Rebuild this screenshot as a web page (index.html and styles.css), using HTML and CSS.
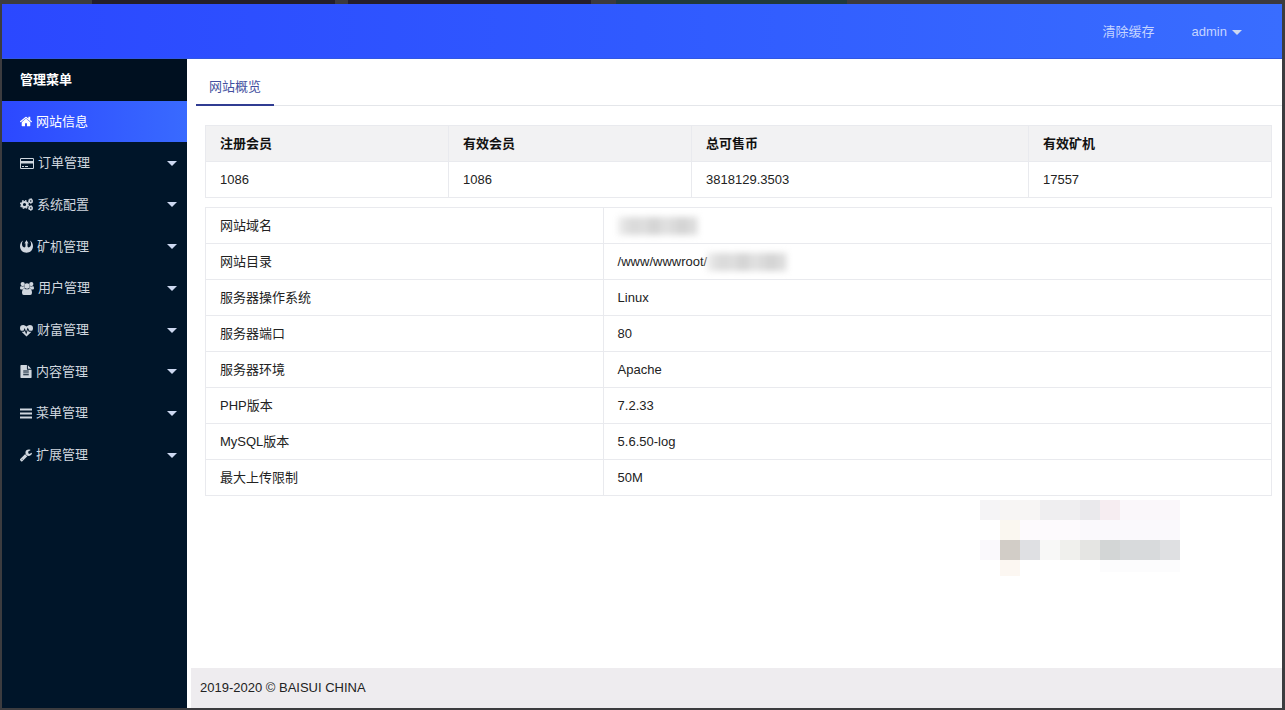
FILE: index.html
```html
<!DOCTYPE html>
<html lang="zh-CN">
<head>
    <meta charset="UTF-8">
    <meta name="viewport" content="width=device-width, initial-scale=1.0">
    <title>网站概览</title>
    <link rel="stylesheet" href="styles.css">
</head>
<body>
    <div class="top-strip"></div>
    <header class="header">
        <a href="#">清除缓存</a>
        <a href="#" class="user">admin <span class="caret"></span></a>
    </header>

    <div class="wrapper">
        <nav class="sidebar">
            <div class="menu">
                <div class="menu-title">管理菜单</div>
                <a href="#" class="menu-item active">
                    <svg class="icon" viewBox="89 200 1614 1400"><path d="M1472 992v480q0 26-19 45t-45 19h-384v-384h-256v384h-384q-26 0-45-19t-19-45v-480q0-1 .5-3t.5-3l575-474 575 474q1 2 1 6zm223-69l-62 74q-8 9-21 11h-3q-13 0-21-7l-692-577-692 577q-12 8-24 7-13-2-21-11l-62-74q-8-10-7-23.5t11-21.5l719-599q32-26 76-26t76 26l244 204v-195q0-14 9-23t23-9h192q14 0 23 9t9 23v408l219 182q10 8 11 21.5t-7 23.5z"/></svg>
                    <span>网站信息</span>
                </a>
                <a href="#" class="menu-item">
                    <svg class="icon wide" viewBox="0 0 14 12"><path fill-rule="evenodd" d="M1.200 .5h11.600q1.200 0 1.200 1.200v8.600q0 1.200-1.200 1.200H1.200Q0 11.500 0 10.300V1.700Q0 .5 1.200 .5zM1 1.500v2h12v-2zM1 6v4.500h12V6zM2 8.500h2v1H2zM5 8.500h3v1H5z"/></svg>
                    <span>订单管理</span><i class="caret"></i>
                </a>
                <a href="#" class="menu-item">
                    <svg class="icon mid" viewBox="0 0 13 13"><g fill="none" stroke="currentColor"><circle cx="4.500" cy="6.500" r="2.600" stroke-width="2"/><circle cx="4.500" cy="6.500" r="3.900" stroke-width="1.300" stroke-dasharray="1.700 1.360"/><circle cx="10.700" cy="3" r="1.500" stroke-width="1.400"/><circle cx="10.700" cy="3" r="2.300" stroke-dasharray="1.400 1"/><circle cx="10.700" cy="10" r="1.500" stroke-width="1.400"/><circle cx="10.700" cy="10" r="2.300" stroke-dasharray="1.400 1"/></g></svg>
                    <span>系统配置</span><i class="caret"></i>
                </a>
                <a href="#" class="menu-item">
                    <svg class="icon mid" viewBox="0 0 13 13"><path d="M3.200 .6C1.200 1.700 0 3.900 0 6.300 0 10 2.900 12.800 6.500 12.800S13 10 13 6.300C13 3.900 11.800 1.700 9.800 .6c1 1.400 1.400 2.700 1.200 4C10.800 6.300 10 7.400 8.800 7.400 8 7.400 7.500 6.800 7.500 6V3.200l1 .3L6.500 0 4.500 3.500l1-.3V6c0 .8-.5 1.400-1.300 1.400C3 7.400 2.200 6.300 2 4.600 1.800 3.300 2.200 2 3.200 .6z"/></svg>
                    <span>矿机管理</span><i class="caret"></i>
                </a>
                <a href="#" class="menu-item">
                    <svg class="icon wide" viewBox="0 0 14 13"><circle cx="2.700" cy="2.100" r="2.100"/><circle cx="11.300" cy="2.100" r="2.100"/><circle cx="7" cy="4" r="2.700"/><path d="M1 4q1.700 1 3 0 .2 1.600 1 2.300Q3.400 6.300 2.700 7.500H1.300Q0 7.500 0 6.200 0 4.500 1 4zM13 4q-1.700 1-3 0-.2 1.600-1 2.300 1.600 0 2.300 1.200h1.400Q14 7.500 14 6.200 14 4.500 13 4zM4.300 6.500q2.700 1.700 5.400 0Q12 7.200 12 10.800q0 2.200-1.800 2.200H3.800Q2 13 2 10.800q0-3.600 2.300-4.300z"/></svg>
                    <span>用户管理</span><i class="caret"></i>
                </a>
                <a href="#" class="menu-item">
                    <svg class="icon mid" viewBox="0 0 13 12"><path d="M6.500 12 1.600 7.200h2.500l.6-1.300 1.500 4 1.600-4.700 1 2h2.700zM.8 6.200Q0 5 0 3.700 0 .5 3.300 .5q1.700 0 3.200 1.600Q8 .5 9.700 .5 13 .5 13 3.700q0 1.300-.8 2.500H9.400L7.700 2.900 6.100 7.300 4.700 3.500 3.500 6.200z"/></svg>
                    <span>财富管理</span><i class="caret"></i>
                </a>
                <a href="#" class="menu-item">
                    <svg class="icon" viewBox="128 0 1536 1792"><path d="M1596 476q14 14 28 36h-472v-472q22 14 36 28zm-476 164h544v1056q0 40-28 68t-68 28h-1344q-40 0-68-28t-28-68v-1600q0-40 28-68t68-28h800v544q0 40 28 68t68 28zm160 736v-64q0-14-9-23t-23-9h-704q-14 0-23 9t-9 23v64q0 14 9 23t23 9h704q14 0 23-9t9-23zm0-256v-64q0-14-9-23t-23-9h-704q-14 0-23 9t-9 23v64q0 14 9 23t23 9h704q14 0 23-9t9-23zm0-256v-64q0-14-9-23t-23-9h-704q-14 0-23 9t-9 23v64q0 14 9 23t23 9h704q14 0 23-9t9-23z"/></svg>
                    <span>内容管理</span><i class="caret"></i>
                </a>
                <a href="#" class="menu-item">
                    <svg class="icon" viewBox="0 0 12 12"><path d="M0 1h12v2H0zM0 5h12v2H0zM0 9h12v2H0z"/></svg>
                    <span>菜单管理</span><i class="caret"></i>
                </a>
                <a href="#" class="menu-item">
                    <svg class="icon" viewBox="90 120 1640 1680"><path d="M448 1472q0-26-19-45t-45-19-45 19-19 45 19 45 45 19 45-19 19-45zm644-420l-682 682q-37 37-90 37-52 0-91-37l-106-108q-38-36-38-90 0-53 38-91l681-681q39 98 114.500 173.500t173.500 114.500zm634-435q0 39-23 106-47 134-164.500 217.500t-258.500 83.500q-185 0-316.500-131.500t-131.500-316.500 131.500-316.500 316.500-131.500q58 0 121.500 16.500t107.500 46.500q16 11 16 28t-16 28l-293 169v224l193 107q5-3 79-48.500t135.500-81 70.500-35.500q15 0 23.500 10t8.500 25z"/></svg>
                    <span>扩展管理</span><i class="caret"></i>
                </a>
            </div>
        </nav>

        <div class="main">
            <main class="content">
                <div class="tabs">
                    <a href="#" class="tab">网站概览</a>
                </div>

                <table class="stats">
                    <thead>
                        <tr>
                            <th>注册会员</th>
                            <th>有效会员</th>
                            <th class="coins">总可售币</th>
                            <th>有效矿机</th>
                        </tr>
                    </thead>
                    <tbody>
                        <tr>
                            <td>1086</td>
                            <td>1086</td>
                            <td>3818129.3503</td>
                            <td>17557</td>
                        </tr>
                    </tbody>
                </table>

                <table class="info">
                    <tr><td>网站域名</td><td><span class="masked"></span></td></tr>
                    <tr><td>网站目录</td><td>/www/wwwroot/<span class="masked"></span></td></tr>
                    <tr><td>服务器操作系统</td><td>Linux</td></tr>
                    <tr><td>服务器端口</td><td>80</td></tr>
                    <tr><td>服务器环境</td><td>Apache</td></tr>
                    <tr><td>PHP版本</td><td>7.2.33</td></tr>
                    <tr><td>MySQL版本</td><td>5.6.50-log</td></tr>
                    <tr><td>最大上传限制</td><td>50M</td></tr>
                </table>

                <svg class="mosaic" viewBox="0 0 200 80" shape-rendering="crispEdges">
                    <path fill="#f5f4f6" d="M0 0h20v20H0z"/>
                    <path fill="#f7f5f4" d="M20 0h40v20H20z"/>
                    <path fill="#efeef0" d="M60 0h40v20H60z"/>
                    <path fill="#eae9ec" d="M100 0h20v20h-20z"/>
                    <path fill="#f6edf1" d="M120 0h20v20h-20z"/>
                    <path fill="#faf7fa" d="M140 0h60v20h-60z"/>
                    <path fill="#faf7f0" d="M20 20h20v20H20z"/>
                    <path fill="#fdfafd" d="M40 20h60v20H40z"/>
                    <path fill="#faf9fc" d="M100 20h100v20H100zM0 40h20v20H0z"/>
                    <path fill="#d2cdc7" d="M20 40h20v20H20z"/>
                    <path fill="#dfe0e3" d="M40 40h20v20H40z"/>
                    <path fill="#f8f8f7" d="M60 40h20v20H60z"/>
                    <path fill="#f0f0ed" d="M80 40h20v20H80z"/>
                    <path fill="#e5e5e3" d="M100 40h20v20h-20z"/>
                    <path fill="#d3d6d6" d="M120 40h20v20h-20z"/>
                    <path fill="#d8dadc" d="M140 40h40v20h-40z"/>
                    <path fill="#dfe0e2" d="M180 40h20v20h-20z"/>
                    <path fill="#fcf7f2" d="M20 60h20v16H20z"/>
                    <path fill="#fcfcfd" d="M120 60h80v12h-80z"/>
                </svg>
            </main>
            <footer class="footer">2019-2020 © BAISUI CHINA</footer>
        </div>
    </div>
</body>
</html>
```
FILE: styles.css
```css
* {
    box-sizing: border-box;
}
body {
    display: flex;
    flex-direction: column;
    min-height: 100vh;
    margin: 0;
    padding: 0 3px 2px 2px;
    background-color: #3c3c3f;
    color: #222;
    font-family: "Liberation Sans", "Noto Sans CJK SC", sans-serif;
    font-size: 13px;
    line-height: 20px;
}
a {
    color: inherit;
    text-decoration: none;
}
.top-strip {
    height: 4px;
    background: linear-gradient(to right, #3c3c3e 7%, #241f2b 7% 26%, #3c3a3e 26% 27%, #251e2c 27% 46%, #3c3a3e 46% 48%, #213a3c 48% 66%, #3c3a3e 66%);
}

/* Header */
.header {
    display: flex;
    justify-content: flex-end;
    align-items: center;
    gap: 37px;
    height: 55px;
    padding: 2px 40px 0 0;
    background: linear-gradient(to right, #2b48ff, #305aff 50%, #396dff);
    border-bottom: 1px solid #3157e2;
    color: #c5d4ff;
}
.user {
    display: flex;
    align-items: center;
    gap: 5px;
}
.caret {
    border: 5px solid transparent;
    border-top-color: #cdd8f0;
    border-bottom-width: 0;
}

/* Sidebar */
.wrapper {
    display: flex;
    flex: 1;
}
.sidebar {
    width: 185px;
    background-color: #001529;
    color: #d0d7df;
}
.menu {
    display: flex;
    flex-direction: column;
    height: 417px;
}
.menu-title,
.menu-item {
    display: flex;
    flex: 1;
    align-items: center;
    gap: 4px;
    padding: 0 10px 0 18px;
}
.menu-title {
    background-color: #001020;
    color: #fff;
    font-weight: bold;
}
.active {
    background: linear-gradient(to right, #2c48ff, #396aff);
    color: #fff;
}
.icon {
    width: 12px;
    height: 13px;
    fill: currentColor;
}
.icon.mid {
    width: 13px;
}
.icon.wide {
    width: 14px;
}
.menu-item .caret {
    margin-left: auto;
}

/* Content */
.main {
    display: flex;
    flex: 1;
    flex-direction: column;
    background-color: #fff;
}
.content {
    flex: 1;
    padding-left: 9px;
}
.tabs {
    display: flex;
    height: 47px;
    border-bottom: 1px solid #e4e6ea;
}
.tab {
    height: 47px;
    padding: 18px 13px 0;
    border-bottom: 2px solid #303c92;
    color: #4450a0;
}
table {
    width: calc(100% - 19px);
    margin: 9px 10px 0 9px;
    border-collapse: collapse;
    table-layout: fixed;
}
th,
td {
    height: 36px;
    padding: 0 14px;
    border: 1px solid #e9eaee;
    text-align: left;
}
th {
    background-color: #f2f2f3;
    color: #111;
}
.stats {
    margin-top: 19px;
}
.coins {
    width: 31.6%;
}
.info td:first-child {
    width: 37.3%;
}
.masked {
    display: inline-block;
    width: 80px;
    height: 18px;
    background: linear-gradient(to right, #ececec, #d8d8d8 20%, #e0e0e0 32%, #d2d2d2 45%, #e2e2e2 60%, #d2d2d2 80%, #e2e2e2);
    filter: blur(3px);
    vertical-align: middle;
}
.mosaic {
    display: block;
    width: 200px;
    height: 80px;
    margin: 4px 102px 0 auto;
}
.footer {
    margin-left: 4px;
    padding: 10px 9px;
    background-color: #eeecef;
}
```
